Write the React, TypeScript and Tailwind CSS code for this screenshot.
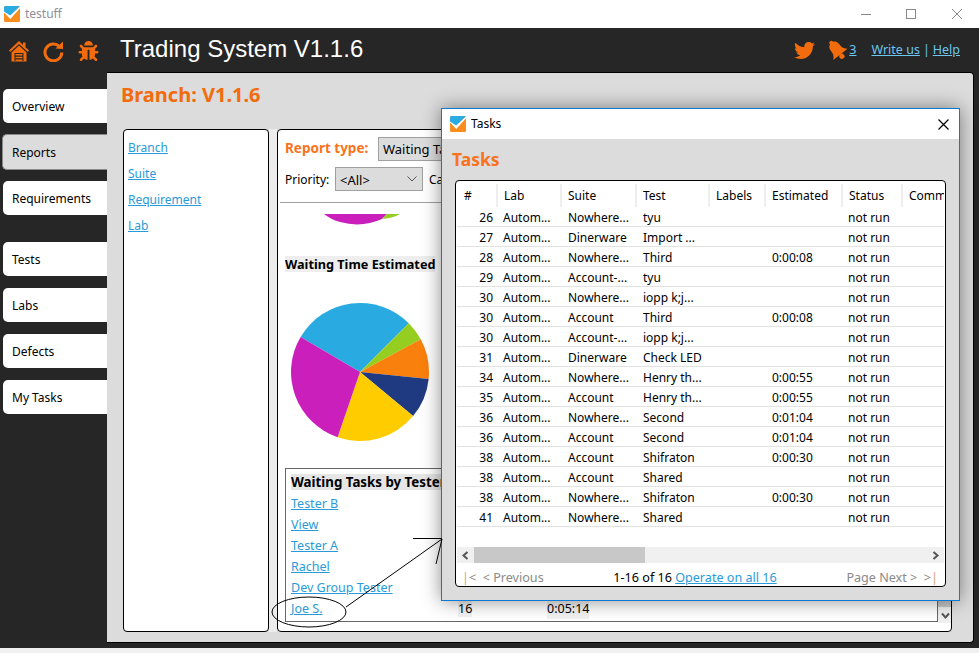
import { FaBug, FaTwitter } from 'react-icons/fa';

const font = { fontFamily: '"Noto Sans", sans-serif' };

const navTabs = [
  { label: 'Overview', cls: 'mt-0 h-[34px] ml-[3px] bg-white' },
  { label: 'Reports', cls: 'mt-[11px] h-[36px] ml-[2px] bg-[#dcdcdc] border border-r-0 border-[#888]' },
  { label: 'Requirements', cls: 'mt-[11px] h-[34px] ml-[3px] bg-white' },
  { label: 'Tests', cls: 'mt-[27px] h-[34px] ml-[3px] bg-white' },
  { label: 'Labs', cls: 'mt-[12px] h-[34px] ml-[3px] bg-white' },
  { label: 'Defects', cls: 'mt-[12px] h-[34px] ml-[3px] bg-white' },
  { label: 'My Tasks', cls: 'mt-[12px] h-[34px] ml-[3px] bg-white' },
];

const columns = ['#', 'Lab', 'Suite', 'Test', 'Labels', 'Estimated', 'Status', 'Comm'];

const rows = [
  ['26', 'Autom...', 'Nowhere...', 'tyu', ''],
  ['27', 'Autom...', 'Dinerware', 'Import ...', ''],
  ['28', 'Autom...', 'Nowhere...', 'Third', '0:00:08'],
  ['29', 'Autom...', 'Account-...', 'tyu', ''],
  ['30', 'Autom...', 'Nowhere...', 'iopp k;j...', ''],
  ['30', 'Autom...', 'Account', 'Third', '0:00:08'],
  ['30', 'Autom...', 'Account-...', 'iopp k;j...', ''],
  ['31', 'Autom...', 'Dinerware', 'Check LED', ''],
  ['34', 'Autom...', 'Nowhere...', 'Henry th...', '0:00:55'],
  ['35', 'Autom...', 'Account', 'Henry th...', '0:00:55'],
  ['36', 'Autom...', 'Nowhere...', 'Second', '0:01:04'],
  ['36', 'Autom...', 'Account', 'Second', '0:01:04'],
  ['38', 'Autom...', 'Account', 'Shifraton', '0:00:30'],
  ['38', 'Autom...', 'Account', 'Shared', ''],
  ['38', 'Autom...', 'Nowhere...', 'Shifraton', '0:00:30'],
  ['41', 'Autom...', 'Nowhere...', 'Shared', ''],
];

const testers = ['Tester B', 'View', 'Tester A', 'Rachel', 'Dev Group Tester'];

const Logo = ({ size }: { size: number }) => (
  <svg width={size} height={size} viewBox="0 0 16 16">
    <rect width="16" height="16" rx="1.5" fill="#fb8c1e" />
    <path d="M1.5 0H16L6 10 0 6V1.5A1.5 1.5 0 0 1 1.5 0Z" fill="#2aabe2" />
    <path d="M0 6.5 6.3 13 16 2.2V0.5L6.2 9.6 0 5.5Z" fill="#fff" />
  </svg>
);

const HomeIcon = () => (
  <svg width="20" height="22" viewBox="0 0 20 22" fill="#f26c0d">
    <path d="M10 1 0 10.5 1.2 12 10 4 18.8 12 20 10.5 16.5 7.2V2.5H14V4.9Z" />
    <path fillRule="evenodd" d="M10 5.5 2.5 12.5V21.5H17.5V12.5ZM5.5 13H14.5V21H5.5Z" />
    <path d="M6.5 14H13.5V15.5H6.5ZM6.5 16.8H13.5V18.3H6.5ZM6.5 19.6H13.5V21H6.5Z" />
  </svg>
);

const RefreshIcon = () => (
  <svg width="21" height="21" viewBox="0 0 21 21" fill="none">
    <path d="M16.4 5.5A8.4 8.4 0 1 0 18.8 11.5" stroke="#f26c0d" strokeWidth="3" />
    <path d="M12.5 7.5 20 8V0.5Z" fill="#f26c0d" />
  </svg>
);

const BellIcon = () => (
  <svg width="21" height="20" viewBox="0 0 21 20">
    <g transform="rotate(-38 10 10)" fill="#f26c0d">
      <circle cx="10" cy="0.8" r="2" />
      <path d="M10 1C5 1 4.6 5 4.6 8.5 4.6 12 3 13.5 1 15.5H19C17 13.5 15.4 12 15.4 8.5 15.4 5 15 1 10 1Z" />
      <circle cx="10" cy="18" r="2.6" />
    </g>
  </svg>
);

const Pie = () => (
  <svg width="140" height="140" viewBox="-70 -70 140 140">
    <path d="M0 0L-59.4 -35.05A69 69 0 0 1 48.8 -48.8Z" fill="#29abe2" />
    <path d="M0 0L48.8 -48.8A69 69 0 0 1 60.75 -32.7Z" fill="#95ce20" />
    <path d="M0 0L60.75 -32.7A69 69 0 0 1 68.65 6.97Z" fill="#f9800d" />
    <path d="M0 0L68.65 6.97A69 69 0 0 1 53.07 44.1Z" fill="#203a82" />
    <path d="M0 0L53.07 44.1A69 69 0 0 1 -22.4 65.25Z" fill="#ffcc00" />
    <path d="M0 0L-22.4 65.25A69 69 0 0 1 -59.4 -35.05Z" fill="#ca1fbb" />
  </svg>
);

const Chevron = ({ dir }: { dir: 'left' | 'right' | 'down' }) => (
  <svg width="9" height="9" viewBox="0 0 9 9" fill="none" stroke="#555" strokeWidth="2">
    {dir === 'left' && <path d="M6.5 1 2.5 4.5 6.5 8" />}
    {dir === 'right' && <path d="M2.5 1 6.5 4.5 2.5 8" />}
    {dir === 'down' && <path d="M1 2.5 4.5 6.5 8 2.5" />}
  </svg>
);

function TasksWindow() {
  return (
    <div className="absolute left-[441px] top-[108px] w-[519px] h-[493px] border border-[#0a7ad6] bg-[#dcdcdc] flex flex-col shadow-[0_0_18px_rgba(0,0,0,0.45)]">
      <div className="h-[30px] bg-white flex items-center pl-[8px] pr-[10px] shrink-0">
        <Logo size={16} />
        <span className="ml-[5px] text-[12px] text-black">Tasks</span>
        <svg className="ml-auto" width="11" height="11" viewBox="0 0 11 11" stroke="#000" strokeWidth="1.2">
          <path d="M0.5 0.5 10.5 10.5M10.5 0.5 0.5 10.5" />
        </svg>
      </div>
      <div className="h-[41px] pl-[10px] pt-[6px] shrink-0 font-bold text-[17.5px] leading-[28px] text-[#f9731c]">Tasks</div>
      <div className="ml-[13px] w-[491px] h-[407px] bg-white border border-black rounded-[4px] p-[1px] pt-[3px] flex flex-col">
        <div className="flex-1">
          <div className="grid grid-cols-[41px_64px_75px_73px_56px_77px_60px_41px] h-[23px] overflow-hidden">
            {columns.map((col) => (
              <div key={col} className="pl-[6px] first:pl-[7px] text-[12px] leading-[23px] text-black border-r-2 border-[#eeeeee] last:border-r-0 whitespace-nowrap overflow-hidden">
                {col}
              </div>
            ))}
          </div>
          {rows.map((row, i) => (
            <div key={i} className="grid grid-cols-[40px_64px_75px_73px_56px_77px_60px_43px] h-[20px] border-b border-[#e2e2e2] text-[12px] leading-[21px] text-black">
              <div className="text-right pr-[4px]">{row[0]}</div>
              <div className="pl-[6px] whitespace-nowrap">{row[1]}</div>
              <div className="pl-[7px] whitespace-nowrap">{row[2]}</div>
              <div className="pl-[7px] whitespace-nowrap">{row[3]}</div>
              <div />
              <div className="pl-[7px]">{row[4]}</div>
              <div className="pl-[6px] whitespace-nowrap">not run</div>
              <div />
            </div>
          ))}
        </div>
        <div className="h-[16px] bg-[#f0f0f0] flex items-center shrink-0">
          <div className="w-[17px] flex justify-center"><Chevron dir="left" /></div>
          <div className="w-[171px] h-full bg-[#c8c8c8]" />
          <div className="ml-auto w-[17px] flex justify-center"><Chevron dir="right" /></div>
        </div>
        <div className="h-[22px] flex justify-between items-center pl-[5px] pr-[6px] pt-[8px] text-[12.6px] shrink-0">
          <span className="text-[#8a8a8a] whitespace-nowrap">
            <span className="text-[#e0a070]">|</span>&lt;&nbsp; &lt; Previous
          </span>
          <span className="whitespace-nowrap text-black">
            1-16 of 16 <a className="text-[#2a9bd8] underline">Operate on all 16</a>
          </span>
          <span className="text-[#8a8a8a] whitespace-nowrap">
            Page Next &gt; &nbsp;&gt;<span className="text-[#e0a070]">|</span>
          </span>
        </div>
      </div>
    </div>
  );
}

function ReportPane() {
  return (
    <div className="w-[675px] bg-white border border-black rounded-[4px] flex flex-col overflow-hidden">
      <div className="h-[73px] mx-[2px] border-b border-[#a0a0a0] shrink-0 pl-[5px] pt-[7px] whitespace-nowrap overflow-hidden">
        <div className="flex items-center h-[24px]">
          <span className="font-bold text-[13.5px] text-[#f9731c] w-[93px] -mt-[2px]">Report type:</span>
          <div className="w-[230px] h-[24px] bg-[#dcdcdc] border border-[#a0a0a0] text-[13px] leading-[22px] pl-[4px] text-black">Waiting Tasks</div>
        </div>
        <div className="flex items-center h-[24px] mt-[6px] text-[12px] leading-[20px] text-black">
          <span className="w-[50px] pt-[2px]">Priority:</span>
          <div className="w-[88px] h-[24px] bg-[#dcdcdc] border border-[#a0a0a0] flex items-center justify-between pl-[4px] pr-[5px] text-[13px]">
            <span className="pt-[2px]">&lt;All&gt;</span>
            <svg width="10" height="6" viewBox="0 0 10 6" fill="none" stroke="#555"><path d="M0.5 0.5 5 5 9.5 0.5" /></svg>
          </div>
          <span className="ml-[6px] pt-[2px]">Category:</span>
        </div>
      </div>
      <div className="flex-1 flex min-h-0 pb-[8px]">
        <div className="w-[660px] pl-[7px] pt-[11px] shrink-0">
          <svg className="ml-[39px]" width="76" height="11" viewBox="0 0 76 11">
            <path d="M0 0H63L58 5Q38 14 16 8Q6 5 0 0Z" fill="#ca1fbb" />
            <path d="M63 0H76Q70 4 58 5Z" fill="#95ce20" />
          </svg>
          <div className="mt-[31px] h-[16px] w-[150px] bg-[#eeeeee] font-bold text-[12.7px] leading-[16px] text-black whitespace-nowrap">Waiting Time Estimated</div>
          <div className="mt-[30px] ml-[5px] h-[140px]"><Pie /></div>
          <div className="mt-[26px] w-[653px] h-[154px] border border-[#666] pl-[5px] pt-[5px]">
            <div className="w-[165px] h-[16px] bg-[#e6e6e6] font-bold text-[13.3px] leading-[16px] text-black whitespace-nowrap">Waiting Tasks by Tester</div>
            <div className="mt-[3px]">
              {testers.map((t) => (
                <div key={t} className="h-[21px] leading-[21px] text-[12.5px]">
                  <a className="text-[#2a9bd8] underline">{t}</a>
                </div>
              ))}
              <div className="h-[21px] leading-[21px] text-[12.5px] flex">
                <a className="text-[#2a9bd8] underline w-[167px]">Joe S.</a>
                <span className="w-[89px]"><span className="bg-[#f2f2f2] text-black">16</span></span>
                <span className="bg-[#f2f2f2] text-black">0:05:14</span>
              </div>
            </div>
          </div>
        </div>
        <div className="w-[14px] bg-[#f0f0f0] flex flex-col justify-end items-center shrink-0">
          <div className="w-full h-[60px] bg-[#c8c8c8]" />
          <div className="h-[16px] flex items-center"><Chevron dir="down" /></div>
        </div>
      </div>
    </div>
  );
}

export default function App() {
  return (
    <div className="relative w-[979px] h-[653px] overflow-hidden bg-[#f0f0f0] flex flex-col" style={font}>
      {/* Title bar */}
      <div className="h-[28px] bg-white flex items-center pl-[4px] shrink-0">
        <Logo size={16} />
        <span className="ml-[5px] text-[12px] text-[#8e8e98]">testuff</span>
        <div className="ml-auto flex items-center">
          <div className="w-[10px] h-px bg-[#888] mr-[35px]" />
          <div className="w-[10px] h-[10px] border border-[#888] mr-[36px]" />
          <svg className="mr-[17px]" width="10" height="10" viewBox="0 0 10 10" stroke="#888">
            <path d="M0 0 10 10M10 0 0 10" />
          </svg>
        </div>
      </div>

      <div className="h-[620px] bg-[#262626] flex flex-col shrink-0">
        {/* Header */}
        <div className="h-[44px] flex items-center shrink-0 relative">
          <div className="ml-[9px] flex items-center gap-[14px] mt-[2px]">
            <HomeIcon />
            <RefreshIcon />
            <FaBug className="text-[#f26c0d] text-[20px] w-[21px]" />
          </div>
          <h1 className="ml-[21px] -mt-[2px] text-[24px] text-white leading-none whitespace-nowrap" style={{ fontFamily: '"Liberation Sans", sans-serif' }}>
            Trading System V1.1.6
          </h1>
          <div className="ml-auto mr-[19px] flex items-center text-[12.5px] text-[#6cc6f0]">
            <FaTwitter className="text-[#f26c0d] text-[21px] mr-[12px]" />
            <BellIcon />
            <a className="underline ml-[1px]">3</a>
            <a className="underline ml-[15px]">Write us</a>
            <span className="mx-[3px]">|</span>
            <a className="underline">Help</a>
          </div>
        </div>

        <div className="flex flex-1 min-h-0 pb-[5px] pr-[5px]">
          {/* Sidebar */}
          <div className="w-[107px] pt-[17px] shrink-0">
            {navTabs.map((tab) => (
              <div key={tab.label} className={`${tab.cls} rounded-l-[5px] pl-[9px] pt-[2px] flex items-center text-[12px] text-black`}>
                {tab.label}
              </div>
            ))}
          </div>

          {/* Main panel */}
          <div className="flex-1 bg-[#dcdcdc] border-t border-r border-b border-black rounded-tr-[4px] rounded-br-[4px] flex flex-col min-w-0">
            <div className="h-[56px] pl-[14px] pt-[8px] font-bold text-[20px] leading-[28px] text-[#f26c0d] shrink-0">Branch: V1.1.6</div>
            <div className="flex-1 flex min-h-0 pl-[16px] pb-[10px]">
              <div className="w-[146px] bg-white border border-black rounded-[4px] pl-[4px] pt-[5px] text-[12px] shrink-0">
                {['Branch', 'Suite', 'Requirement', 'Lab'].map((l) => (
                  <div key={l} className="h-[26px] leading-[26px]">
                    <a className="text-[#2a9bd8] underline">{l}</a>
                  </div>
                ))}
              </div>
              <div className="w-[8px] bg-[#ececec] shrink-0" />
              <ReportPane />
            </div>
          </div>
        </div>
      </div>

      <TasksWindow />

      {/* Hand drawn annotation */}
      <svg className="absolute left-0 top-0 pointer-events-none" width="979" height="653" fill="none" stroke="#000">
        <ellipse cx="309" cy="612" rx="37" ry="15" />
        <path d="M346 607 442 539M413 538.5H442M442 539 436 564" />
      </svg>
    </div>
  );
}
